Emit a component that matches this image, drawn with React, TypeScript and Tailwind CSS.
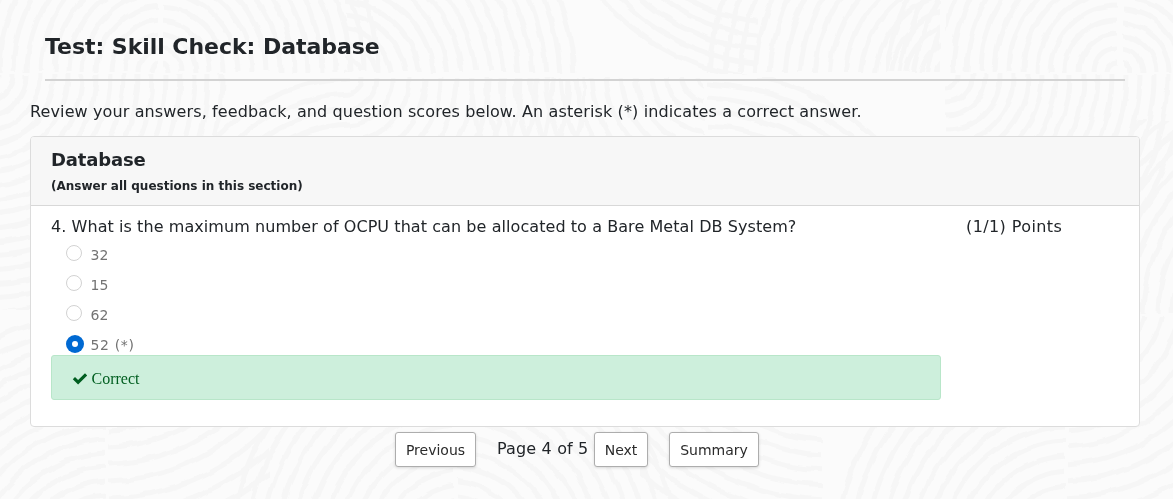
import React from "react";

type Family = {
  id: string;
  box: [number, number, number, number];
  cx: number;
  cy: number;
  from: number;
  to: number;
  step: number;
};

const families: Family[] = [
  { id: "a", box: [-10, -10, 168, 82], cx: 163, cy: 72, from: 10, to: 180, step: 14 },
  { id: "b", box: [163, -10, 220, 82], cx: 158, cy: 72, from: 10, to: 220, step: 14 },
  { id: "c", box: [345, -10, 240, 82], cx: 338, cy: 82, from: 12, to: 244, step: 14 },
  { id: "d", box: [580, -10, 178, 84], cx: 775, cy: -150, from: 172, to: 240, step: 14 },
  { id: "e", box: [705, -10, 235, 82], cx: 965, cy: 82, from: 30, to: 260, step: 15 },
  { id: "f", box: [885, -10, 55, 82], cx: 1130, cy: 110, from: 192, to: 250, step: 14 },
  { id: "g", box: [946, -10, 171, 82], cx: 1117, cy: 72, from: 10, to: 230, step: 14 },
  { id: "h", box: [1123, -10, 60, 82], cx: 1120, cy: 72, from: 10, to: 130, step: 13 },
  { id: "i", box: [-10, 74, 235, 235], cx: -14, cy: 76, from: 12, to: 240, step: 14 },
  { id: "j", box: [200, 78, 150, 60], cx: 355, cy: 270, from: 116, to: 200, step: 15 },
  { id: "k", box: [350, 78, 235, 60], cx: 345, cy: 78, from: 16, to: 240, step: 16 },
  { id: "l", box: [470, 78, 234, 60], cx: 712, cy: 72, from: 16, to: 245, step: 15 },
  { id: "m", box: [708, 78, 200, 60], cx: 700, cy: 330, from: 190, to: 260, step: 14 },
  { id: "n", box: [946, 74, 240, 190], cx: 946, cy: 76, from: 12, to: 240, step: 14 },
  { id: "v", box: [1130, 120, 50, 194], cx: 1310, cy: 315, from: 137, to: 260, step: 15 },
  { id: "o", box: [-10, 320, 115, 190], cx: 110, cy: 575, from: 80, to: 270, step: 14 },
  { id: "p", box: [108, 420, 160, 90], cx: 105, cy: 275, from: 155, to: 260, step: 17 },
  { id: "q", box: [225, 420, 229, 90], cx: 462, cy: 550, from: 50, to: 240, step: 15 },
  { id: "r", box: [458, 420, 230, 90], cx: 448, cy: 560, from: 50, to: 235, step: 15 },
  { id: "s", box: [640, 420, 182, 90], cx: 830, cy: 260, from: 180, to: 290, step: 15 },
  { id: "t", box: [830, 420, 235, 90], cx: 1070, cy: 555, from: 54, to: 235, step: 15 },
  { id: "u", box: [1068, 317, 115, 190], cx: 1060, cy: 290, from: 89, to: 260, step: 17 },
];

function radii(f: Family): number[] {
  const out: number[] = [];
  for (let r = f.from; r <= f.to; r += f.step) out.push(r);
  return out;
}

function Backdrop() {
  return (
    <svg className="absolute inset-0 -z-10" width="1173" height="499" fill="none" aria-hidden="true">
      <defs>
        <filter id="wobble" x="0" y="0" width="1173" height="499" filterUnits="userSpaceOnUse">
          <feTurbulence type="fractalNoise" baseFrequency="0.05" numOctaves="2" seed="4" />
          <feDisplacementMap in="SourceGraphic" scale="6" xChannelSelector="R" yChannelSelector="G" />
        </filter>
        {families.map((f) => (
          <clipPath id={`area-${f.id}`} key={f.id}>
            <rect x={f.box[0]} y={f.box[1]} width={f.box[2]} height={f.box[3]} />
          </clipPath>
        ))}
      </defs>
      <g filter="url(#wobble)">
        {families.map((f) => (
          <g key={f.id} clipPath={`url(#area-${f.id})`} stroke="#f6f6f6" strokeWidth="5">
            {radii(f).map((r) => (
              <circle key={r} cx={f.cx} cy={f.cy} r={r} />
            ))}
          </g>
        ))}
      </g>
    </svg>
  );
}

function Option({ label, checked = false }: { label: string; checked?: boolean }) {
  return (
    <div className="flex h-[30px] items-start">
      <span className="flex w-[24.5px] shrink-0">
        {checked ? (
          <span className="flex size-[18px] items-center justify-center rounded-full bg-[#0069d2]">
            <span className="size-[6px] rounded-full bg-white" />
          </span>
        ) : (
          <span className="size-4 rounded-full border border-[#d2d2d2] bg-white" />
        )}
      </span>
      <span
        className={`whitespace-nowrap text-[14px] leading-5 text-[#737373] ${checked ? "tracking-[0.65px]" : "tracking-[0.1px]"}`}
      >
        {label}
      </span>
    </div>
  );
}

function NavButton({ label, className }: { label: string; className: string }) {
  return (
    <button
      className={`h-[35px] shrink-0 whitespace-nowrap rounded-[3px] border border-[#adadad] bg-white text-[14px] leading-5 text-[#2b2b2b] shadow-[0_1px_3px_rgba(0,0,0,0.14)] ${className}`}
    >
      {label}
    </button>
  );
}

export default function App() {
  return (
    <main className="relative isolate h-[499px] w-[1173px] overflow-hidden bg-[#fbfbfb] font-['DejaVu_Sans',sans-serif] text-[16px] text-[#212529]">
      <Backdrop />
      <header className="ml-[45px] h-[81px] w-[1080px] border-b-2 border-[#d3d3d3] pt-[31px]">
        <h1 className="whitespace-nowrap text-[22px] font-bold leading-8 tracking-[-0.04px]">Test: Skill Check: Database</h1>
      </header>
      <p className="ml-[30px] mt-[19px] whitespace-nowrap leading-6 tracking-[0.12px]">
        Review your answers, feedback, and question scores below. An asterisk (*) indicates a correct answer.
      </p>
      <section className="ml-[30px] mt-3 h-[291px] w-[1110px] overflow-hidden rounded-[4px] border border-[#dcdcdc] bg-white">
        <div className="h-[69px] border-b border-[#d8d8d8] bg-[#f7f7f7] pl-5 pt-[11px]">
          <h2 className="text-[18px] font-bold leading-6 tracking-[-0.15px]">Database</h2>
          <p className="mt-1 whitespace-nowrap text-[12px] font-bold leading-5">(Answer all questions in this section)</p>
        </div>
        <div className="flex pl-5 pt-[9px]">
          <div className="w-[915px] shrink-0">
            <p className="whitespace-nowrap leading-6 tracking-[0.07px]">
              4. What is the maximum number of OCPU that can be allocated to a Bare Metal DB System?
            </p>
            <div className="mt-1.5 h-[110px] pl-[15px]">
              <Option label="32" />
              <Option label="15" />
              <Option label="62" />
              <Option label="52 (*)" checked />
            </div>
            <div className="flex h-[45px] w-[890px] items-center gap-1 rounded-[3px] border border-[#b8e6c9] bg-[#cdefdc] pl-[19.5px] text-[#005e20]">
              <svg className="mt-0.5 w-4" height="16" viewBox="0 0 16 16" fill="currentColor" aria-hidden="true">
                <path d="M.8 8.2 3 6l3.1 3.1L13 2.3 15.2 4.5 6.1 13.5Z" />
              </svg>
              <span className="pt-0.5 font-['Liberation_Serif',serif] text-[16px] leading-6">Correct</span>
            </div>
          </div>
          <p className="whitespace-nowrap leading-6 tracking-[0.4px]">(1/1) Points</p>
        </div>
      </section>
      <nav className="ml-[395px] mt-[5px] flex">
        <NavButton label="Previous" className="w-[81px]" />
        <span className="ml-[21px] w-[97px] whitespace-nowrap pt-[5px] leading-6 tracking-[0.15px]">Page 4 of 5</span>
        <NavButton label="Next" className="w-[54px]" />
        <NavButton label="Summary" className="ml-[21px] w-[90px]" />
      </nav>
    </main>
  );
}
